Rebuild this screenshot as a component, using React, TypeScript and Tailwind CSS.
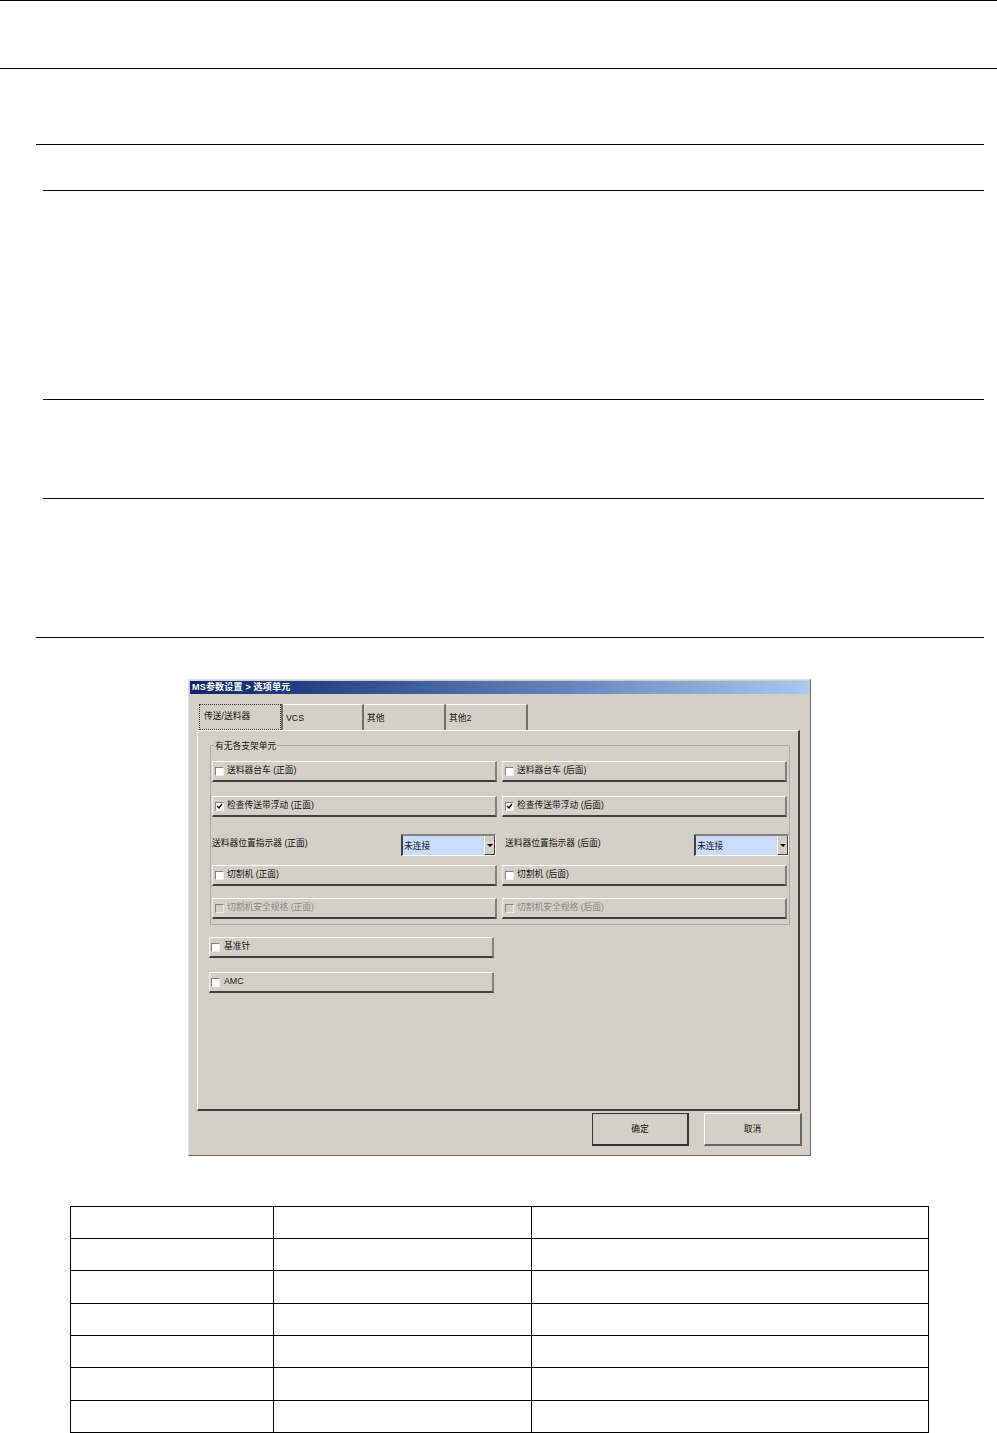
import React from "react";

const cjk = "font-['Liberation_Sans','Noto_Sans_CJK_SC',sans-serif]";

function CheckRow({ label, checked, disabled, inset = "pl-[2px] gap-[3px]", className = "" }: { label: string; checked?: boolean; disabled?: boolean; inset?: string; className?: string }) {
  return (
    <div
      className={`flex items-center h-[21px] ${inset} bg-[#d4d0c8] border-t border-l border-t-white border-l-[#eeeeee] border-r-2 border-b-2 border-r-[#808080] border-b-[#404040] ${className}`}
    >
      <span className={`w-[9px] h-[9px] shrink-0 flex items-center justify-center border border-[#808080] border-r-[#eeeeee] border-b-[#eeeeee] ${disabled ? "bg-[#d4d0c8]" : "bg-white"}`}>
        {checked && (
          <svg width="7" height="7" viewBox="0 0 7 7">
            <path d="M1 3 L3 5 L6 1" fill="none" stroke="#000" strokeWidth="1.4" />
          </svg>
        )}
      </span>
      <span className={`text-[8.75px] leading-none pb-[1px] ${disabled ? "text-[#8a8a8a]" : "text-[#111]"}`}>{label}</span>
    </div>
  );
}

function Combo() {
  return (
    <div className="flex w-[95px] h-[22px] border-t-2 border-l-2 border-t-[#808080] border-l-[#404040] border-b border-r border-b-white border-r-white">
      <div className="flex-1 bg-[#c9defe] text-[8.75px] text-[#111] flex items-center pl-[1px] pt-[2px]">未连接</div>
      <div className="w-[11px] bg-[#d4d0c8] flex items-center justify-center border-r border-b border-r-[#404040] border-b-[#404040] border-l border-l-white">
        <span className="w-0 h-0 border-l-[3px] border-r-[3px] border-t-[3px] border-l-transparent border-r-transparent border-t-black" />
      </div>
    </div>
  );
}

function Tab({ label, width = "w-[82px]" }: { label: string; width?: string }) {
  return (
    <div className={`${width} h-[26px] border-t border-t-white border-r-2 border-r-[#707070] text-[8.75px] text-[#111] flex items-center pl-[3px] pt-[2px]`}>
      {label}
    </div>
  );
}

function ActiveTab({ label }: { label: string }) {
  return (
    <div className="w-[84px] h-[26px] border-r-2 border-r-[#707070]">
      <div className="h-full border border-dotted border-[#333] text-[8.75px] text-[#111] flex items-center pl-[4px] pb-[1px] whitespace-nowrap">
        {label}
      </div>
    </div>
  );
}

function Dialog() {
  return (
    <div className={`w-[623px] h-[477px] bg-[#d4d0c8] border-t border-l border-t-[#ddd] border-l-[#ddd] border-r border-b border-r-[#666] border-b-[#666] pt-[1px] pl-[1px] flex flex-col ${cjk}`}>
      <div className="h-[13px] mr-[1px] bg-gradient-to-r from-[#0a246a] to-[#a6caf0] text-white text-[9px] tracking-[0.2px] font-bold leading-[13px] pl-[2px] whitespace-nowrap">
        MS参数设置 &gt; 选项单元
      </div>
      <div className="flex mt-[10px] ml-[9px] h-[26px]">
        <ActiveTab label="传送/送料器" />
        <Tab label="VCS" width="w-[81px]" />
        <Tab label="其他" />
        <Tab label="其他2" />
      </div>
      <div className="ml-[7px] w-[603px] h-[381px] border-t border-l border-t-white border-l-white border-r-2 border-b-2 border-r-[#404040] border-b-[#404040] pl-[12px] pt-[14px]">
        <fieldset className="w-[580px] h-[180px] border border-[#aaa] pl-[1px] relative">
          <span className="absolute -top-[5px] left-[3px] bg-[#d4d0c8] px-[1px] text-[8.75px] leading-[10px] text-[#111]">有无各支架单元</span>
          <div className="grid grid-cols-[285px_285px] gap-x-[5px] mt-[15px]">
            <CheckRow label="送料器台车 (正面)" />
            <CheckRow label="送料器台车 (后面)" />
            <CheckRow className="mt-[14px]" label="检查传送带浮动 (正面)" checked />
            <CheckRow className="mt-[14px]" label="检查传送带浮动 (后面)" checked />
            <div className="h-[48px] flex items-start">
              <span className="text-[8.75px] text-[#111] mt-[20px] flex-1">送料器位置指示器 (正面)</span>
              <div className="mt-[17px] mr-[1px]"><Combo /></div>
            </div>
            <div className="h-[48px] flex items-start">
              <span className="text-[8.75px] text-[#111] mt-[20px] ml-[3px] flex-1">送料器位置指示器 (后面)</span>
              <div className="mt-[17px] -mr-[2px]"><Combo /></div>
            </div>
            <CheckRow label="切割机 (正面)" />
            <CheckRow label="切割机 (后面)" />
            <CheckRow className="mt-[12px]" label="切割机安全规格 (正面)" disabled />
            <CheckRow className="mt-[12px]" label="切割机安全规格 (后面)" disabled />
          </div>
        </fieldset>
        <div className="w-[285px] mt-[12px] ml-[-1px]">
          <CheckRow label="基准针" inset="pl-[1px] gap-[4px]" />
          <CheckRow className="mt-[14px]" label="AMC" inset="pl-[1px] gap-[4px]" />
        </div>
      </div>
      <div className="flex justify-end gap-[15px] mt-[2px] mr-[8px]">
        <button className="w-[97px] h-[33px] pt-[1px] bg-[#d4d0c8] border border-[#333] border-r-2 border-b-2 text-[8.75px] text-[#111]">确定</button>
        <button className="w-[98px] h-[33px] pt-[1px] bg-[#d4d0c8] border-t border-l border-t-white border-l-white border-r-2 border-b-2 border-r-[#666] border-b-[#666] text-[8.75px] text-[#111]">取消</button>
      </div>
    </div>
  );
}

const rows = [0, 1, 2, 3, 4, 5, 6];
const rowHeights = ["h-[32px]", "h-[32px]", "h-[33px]", "h-[32px]", "h-[32px]", "h-[33px]", "h-[32px]"];

export default function App() {
  return (
    <div className="w-[997px] h-[1433px] bg-white overflow-hidden">
      <div className="h-[69px] border-t border-b border-black" />
      <div className="mt-[75px] ml-[36px] mr-[13px] h-[494px] border-t border-b border-black pt-[45px]">
        <div className="ml-[7px] h-[354px] border-t border-black">
          <div className="h-[209px] border-b border-black" />
          <div className="h-[99px] border-b border-black" />
        </div>
      </div>
      <div className="mt-[41px] ml-[188px]">
        <Dialog />
      </div>
      <table className="mt-[50px] ml-[70px] w-[858px] border-collapse table-fixed">
        <colgroup>
          <col className="w-[203px]" />
          <col className="w-[258px]" />
          <col className="w-[397px]" />
        </colgroup>
        <tbody>
          {rows.map((r) => (
            <tr key={r} className={rowHeights[r]}>
              <td className="border border-black p-0" />
              <td className="border border-black p-0" />
              <td className="border border-black p-0" />
            </tr>
          ))}
        </tbody>
      </table>
    </div>
  );
}
